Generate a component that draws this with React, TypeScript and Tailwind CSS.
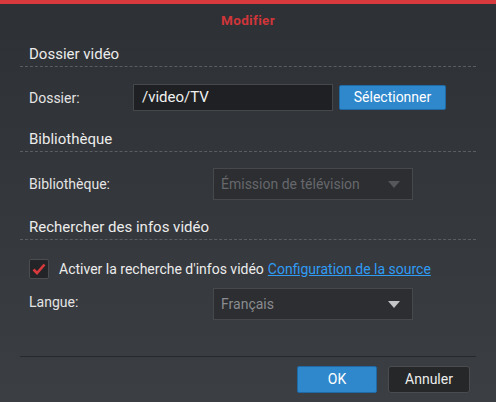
import React from 'react';

const SectionTitle: React.FC<{ children: React.ReactNode }> = ({ children }) => (
  <div className="mx-5 border-b border-dashed border-[#5a5d61] pl-[9px] pb-[3px] text-[15px] leading-[18px] text-[#ececec]">
    {children}
  </div>
);

const Caret = () => (
  <svg width="12" height="7" viewBox="0 0 12 7" className="shrink-0">
    <path d="M0 0 L12 0 L6 7 Z" fill="currentColor" />
  </svg>
);

export default function App() {
  return (
    <div
      className="w-[496px] h-[402px] flex flex-col bg-gradient-to-b from-[#2d3034] to-[#3b3e42] text-[#e6e6e6]"
      style={{ fontFamily: 'Roboto, "Liberation Sans", sans-serif' }}
    >
      {/* barre rouge */}
      <div className="h-[4px] bg-[#d8393c]" />
      <div className="h-[32px] flex items-center justify-center text-[13.5px] font-bold text-[#d0363a] tracking-wide">
        Modifier
      </div>

      {/* Dossier vidéo */}
      <div className="mt-[9px]">
        <SectionTitle>Dossier vidéo</SectionTitle>
      </div>
      <div className="mt-[17px] flex items-center pl-[29px] h-[27px]">
        <div className="w-[104px] text-[14px] leading-[18px] text-[#e4e4e4]">Dossier:</div>
        <div className="w-[200px] h-[27px] bg-[#1f2023] border border-[#45484b] flex items-center px-[8px] text-[15px] text-[#f0f0f0]">
          /video/TV
        </div>
        <button className="ml-[6px] w-[107px] h-[25px] bg-[#2f88cc] border border-[#1f6aa5] rounded-[2px] text-[14px] text-white">
          Sélectionner
        </button>
      </div>

      {/* Bibliothèque */}
      <div className="mt-[19px]">
        <SectionTitle>Bibliothèque</SectionTitle>
      </div>
      <div className="mt-[16px] flex items-center pl-[29px] h-[32px]">
        <div className="w-[184px] text-[14px] leading-[18px] text-[#e4e4e4]">Bibliothèque:</div>
        <div className="w-[200px] h-[32px] bg-[#2c2e32] border border-[#46494c] flex items-center justify-between pl-[7px] pr-[12px] text-[14px] text-[#66686b]">
          <span>Émission de télévision</span>
          <span className="text-[#55575a]"><Caret /></span>
        </div>
      </div>

      {/* Rechercher des infos vidéo */}
      <div className="mt-[18px]">
        <SectionTitle>Rechercher des infos vidéo</SectionTitle>
      </div>
      <div className="mt-[19px] flex items-center pl-[29px] h-[20px]">
        <div className="w-[20px] h-[20px] bg-[#232427] border border-[#4a4c4f] rounded-[2px] flex items-center justify-center">
          <svg width="14" height="12" viewBox="0 0 14 12">
            <path d="M1.5 6.5 L5 10 L12.5 1.5" stroke="#d8393c" strokeWidth="2.6" fill="none" strokeLinejoin="miter" />
          </svg>
        </div>
        <span className="ml-[10px] text-[14px] text-[#ececec]">Activer la recherche d'infos vidéo</span>
        <span className="ml-[4px] text-[14px] text-[#2f9cf6] underline">Configuration de la source</span>
      </div>
      <div className="mt-[9px] flex items-start pl-[29px] h-[32px]">
        <div className="w-[184px] text-[14px] leading-[18px] text-[#e4e4e4] mt-[5px]">Langue:</div>
        <div className="w-[200px] h-[32px] bg-[#2c2e32] border border-[#46494c] flex items-center justify-between pl-[7px] pr-[12px] text-[14px] text-[#8a8c8f]">
          <span>Français</span>
          <span className="text-[#c4c5c7]"><Caret /></span>
        </div>
      </div>

      {/* pied */}
      <div className="mt-auto mx-5 border-t border-[#27292c]" />
      <div className="h-[45px] flex items-start justify-end gap-[11px] pr-[26px] pt-[9px]">
        <button className="w-[80px] h-[27px] bg-[#2f88cc] border border-[#1f6aa5] rounded-[2px] text-[14px] text-white">
          OK
        </button>
        <button className="w-[82px] h-[27px] bg-[#262729] border border-[#4a4c4f] rounded-[3px] text-[14px] text-[#ececec]">
          Annuler
        </button>
      </div>
    </div>
  );
}
